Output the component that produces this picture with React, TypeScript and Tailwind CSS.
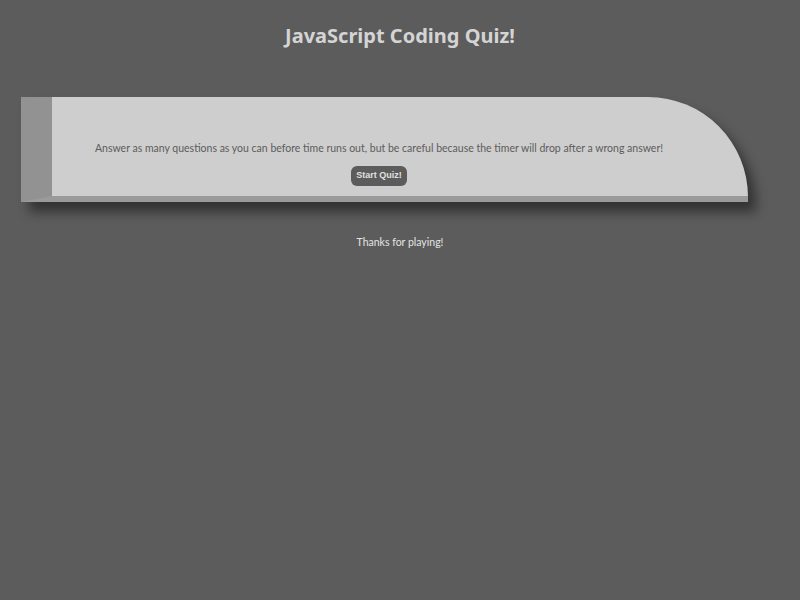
export default function App() {
  return (
    <main
      className="min-h-screen bg-[#5c5c5c] pt-[22px]"
      style={{ fontFamily: 'Lato, "Noto Sans", sans-serif' }}
    >
      <h1
        className="text-center text-[20px] font-bold leading-[28px] text-[#d4d4d4]"
        style={{ fontFamily: '"Noto Sans", "Open Sans", sans-serif' }}
      >
        JavaScript Coding Quiz!
      </h1>

      <section className="ml-[21px] mt-[47px] w-[727px] h-[105px] bg-[#cecece] border-l-[31px] border-l-[#929292] border-b-[6px] border-b-[#9a9a9a] rounded-tr-[100px] shadow-[8px_10px_12px_rgba(0,0,0,0.45)] pr-[42px] pt-[43px] flex flex-col items-center">
        <p className="text-[10.5px] leading-[16px] text-[#5c5c5c]">
          Answer as many questions as you can before time runs out, but be careful because the timer will drop after a wrong answer!
        </p>
        <button
          className="mt-[10px] h-[20px] px-[5px] rounded-[6px] bg-[#5c5c5c] text-[9px] font-bold text-[#e0e0e0]"
          style={{ fontFamily: '"Liberation Sans", Arial, sans-serif' }}
        >
          Start Quiz!
        </button>
      </section>

      <p className="mt-[32px] text-center text-[10.5px] leading-[16px] text-[#e4e4e4]">
        Thanks for playing!
      </p>
    </main>
  );
}
